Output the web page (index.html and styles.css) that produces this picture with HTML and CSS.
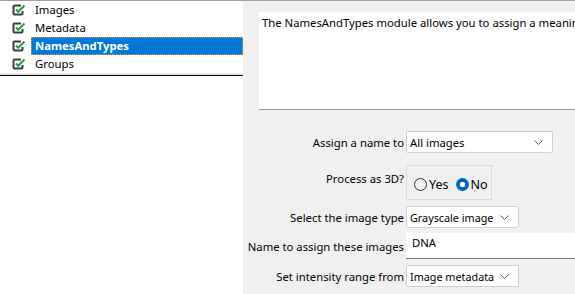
FILE: index.html
```html
<!DOCTYPE html>
<html>
<head>
<meta charset="utf-8">
<link rel="stylesheet" href="styles.css">
</head>
<body>
<div class="app">
  <div class="left">
    <div class="list">
      <div class="row"><svg class="chk" width="14" height="12" viewBox="0 0 14 12"><path d="M9 1.5H2.5a1 1 0 0 0-1 1v7a1 1 0 0 0 1 1h7a1 1 0 0 0 1-1V7" fill="none" stroke="#3a3f45" stroke-width="2"/><path d="M4 5.5l2.2 2.3L12.5 1.5" fill="none" stroke="#22a33a" stroke-width="2"/></svg><span class="name">Images</span></div>
      <div class="row"><svg class="chk" width="14" height="12" viewBox="0 0 14 12"><path d="M9 1.5H2.5a1 1 0 0 0-1 1v7a1 1 0 0 0 1 1h7a1 1 0 0 0 1-1V7" fill="none" stroke="#3a3f45" stroke-width="2"/><path d="M4 5.5l2.2 2.3L12.5 1.5" fill="none" stroke="#22a33a" stroke-width="2"/></svg><span class="name">Metadata</span></div>
      <div class="row"><svg class="chk" width="14" height="12" viewBox="0 0 14 12"><path d="M9 1.5H2.5a1 1 0 0 0-1 1v7a1 1 0 0 0 1 1h7a1 1 0 0 0 1-1V7" fill="none" stroke="#3a3f45" stroke-width="2"/><path d="M4 5.5l2.2 2.3L12.5 1.5" fill="none" stroke="#22a33a" stroke-width="2"/></svg><span class="name sel">NamesAndTypes</span></div>
      <div class="row"><svg class="chk" width="14" height="12" viewBox="0 0 14 12"><path d="M9 1.5H2.5a1 1 0 0 0-1 1v7a1 1 0 0 0 1 1h7a1 1 0 0 0 1-1V7" fill="none" stroke="#3a3f45" stroke-width="2"/><path d="M4 5.5l2.2 2.3L12.5 1.5" fill="none" stroke="#22a33a" stroke-width="2"/></svg><span class="name">Groups</span></div>
    </div>
    <div class="rule"></div>
  </div>
  <div class="right">
    <div class="desc">The NamesAndTypes module allows you to assign a meanin</div>
    <div class="form">
      <div class="lbl r1">Assign a name to</div>
      <div class="combo wide r1"><span>All images</span><svg width="9" height="5" viewBox="0 0 9 5"><path d="M0.5 0.5L4.5 4.5L8.5 0.5" fill="none" stroke="#606060" stroke-width="1"/></svg></div>

      <div class="lbl top r2">Process as 3D?</div>
      <div class="radios r2">
        <span class="radio"></span><span class="rtext">Yes</span>
        <span class="radio on"></span><span class="rtext">No</span>
      </div>

      <div class="lbl r3">Select the image type</div>
      <div class="combo narrow r3"><span>Grayscale image</span><svg width="9" height="5" viewBox="0 0 9 5"><path d="M0.5 0.5L4.5 4.5L8.5 0.5" fill="none" stroke="#606060" stroke-width="1"/></svg></div>

      <div class="lbl r4">Name to assign these images</div>
      <div class="text r4">DNA</div>

      <div class="lbl r5">Set intensity range from</div>
      <div class="combo narrow r5"><span>Image metadata</span><svg width="9" height="5" viewBox="0 0 9 5"><path d="M0.5 0.5L4.5 4.5L8.5 0.5" fill="none" stroke="#606060" stroke-width="1"/></svg></div>
    </div>
  </div>
</div>
</body>
</html>
```
FILE: styles.css
```css
html, body {
  margin: 0;
  padding: 0;
  width: 575px;
  height: 294px;
  overflow: hidden;
  background: #f0f0f0;
}
body {
  font-family: "Segoe UI", "Noto Sans", sans-serif;
  font-size: 11.3px;
  color: #000;
}
.app {
  display: flex;
  border-top: 1px solid #a0a0a0;
  height: 293px;
}
.left {
  width: 243px;
  flex: none;
  background: #fff;
}
.list {
  height: 72px;
  padding: 0;
  border-bottom: 2px solid #e6e6e6;
}
.row {
  display: flex;
  align-items: center;
  height: 18px;
}
.chk {
  margin-left: 12px;
  flex: none;
}
.name {
  margin-left: 5px;
  padding: 0 2px 0 3px;
  line-height: 16px;
  border: 1px solid transparent;
  white-space: nowrap;
}
.name.sel {
  flex: 1;
  background: #0078d7;
  color: #fff;
  font-weight: bold;
  border: 1px dotted #f09a28;
}
.rule {
  border-top: 1px solid #000;
}
.right {
  flex: 1;
  min-width: 0;
  overflow: hidden;
  padding-top: 11px;
}
.desc {
  margin-left: 16px;
  width: 340px;
  height: 91px;
  background: #fff;
  border-bottom: 1px solid #9a9a9a;
  padding: 3px 3px;
  white-space: nowrap;
  overflow: hidden;
  line-height: 16px;
}
.form {
  display: grid;
  grid-template-columns: 161px 1fr;
  column-gap: 2px;
  margin-top: 21px;
  align-items: center;
}
.lbl {
  text-align: right;
  white-space: nowrap;
}
.lbl.top {
  align-self: start;
  padding-top: 6px;
}
.combo {
  box-sizing: border-box;
  background: #fff;
  border: 1px solid #cfcfcf;
  border-radius: 2px;
  display: flex;
  align-items: center;
  justify-content: space-between;
  padding: 0 9px 0 3px;
  height: 22px;
  white-space: nowrap;
  font-size: 10.8px;
}
.combo.wide { width: 147px; font-size: 11.3px; }
.combo.narrow { width: 113px; }
.radios {
  width: 86px;
  height: 35px;
  box-sizing: border-box;
  border: 1px solid #dadada;
  display: flex;
  align-items: center;
  padding: 4px 0 0 7px;
}
.r2 { margin-top: 12px; }
.radio {
  width: 13px;
  height: 13px;
  box-sizing: border-box;
  border: 1px solid #333;
  border-radius: 50%;
  flex: none;
}
.radio.on {
  border: none;
  background: radial-gradient(circle, #fff 0 2.5px, #0067c0 3px);
}
.rtext {
  margin: 0 7px 0 2px;
  font-size: 12.5px;
}
.text {
  height: 26px;
  box-sizing: border-box;
  background: #fff;
  border-bottom: 1px solid #7a7a7a;
  padding: 2px 0 0 6px;
  white-space: nowrap;
}
.r3 { margin-top: 6px; }
.r4 { margin-top: 5px; }
.r5 { margin-top: 6px; }
```
